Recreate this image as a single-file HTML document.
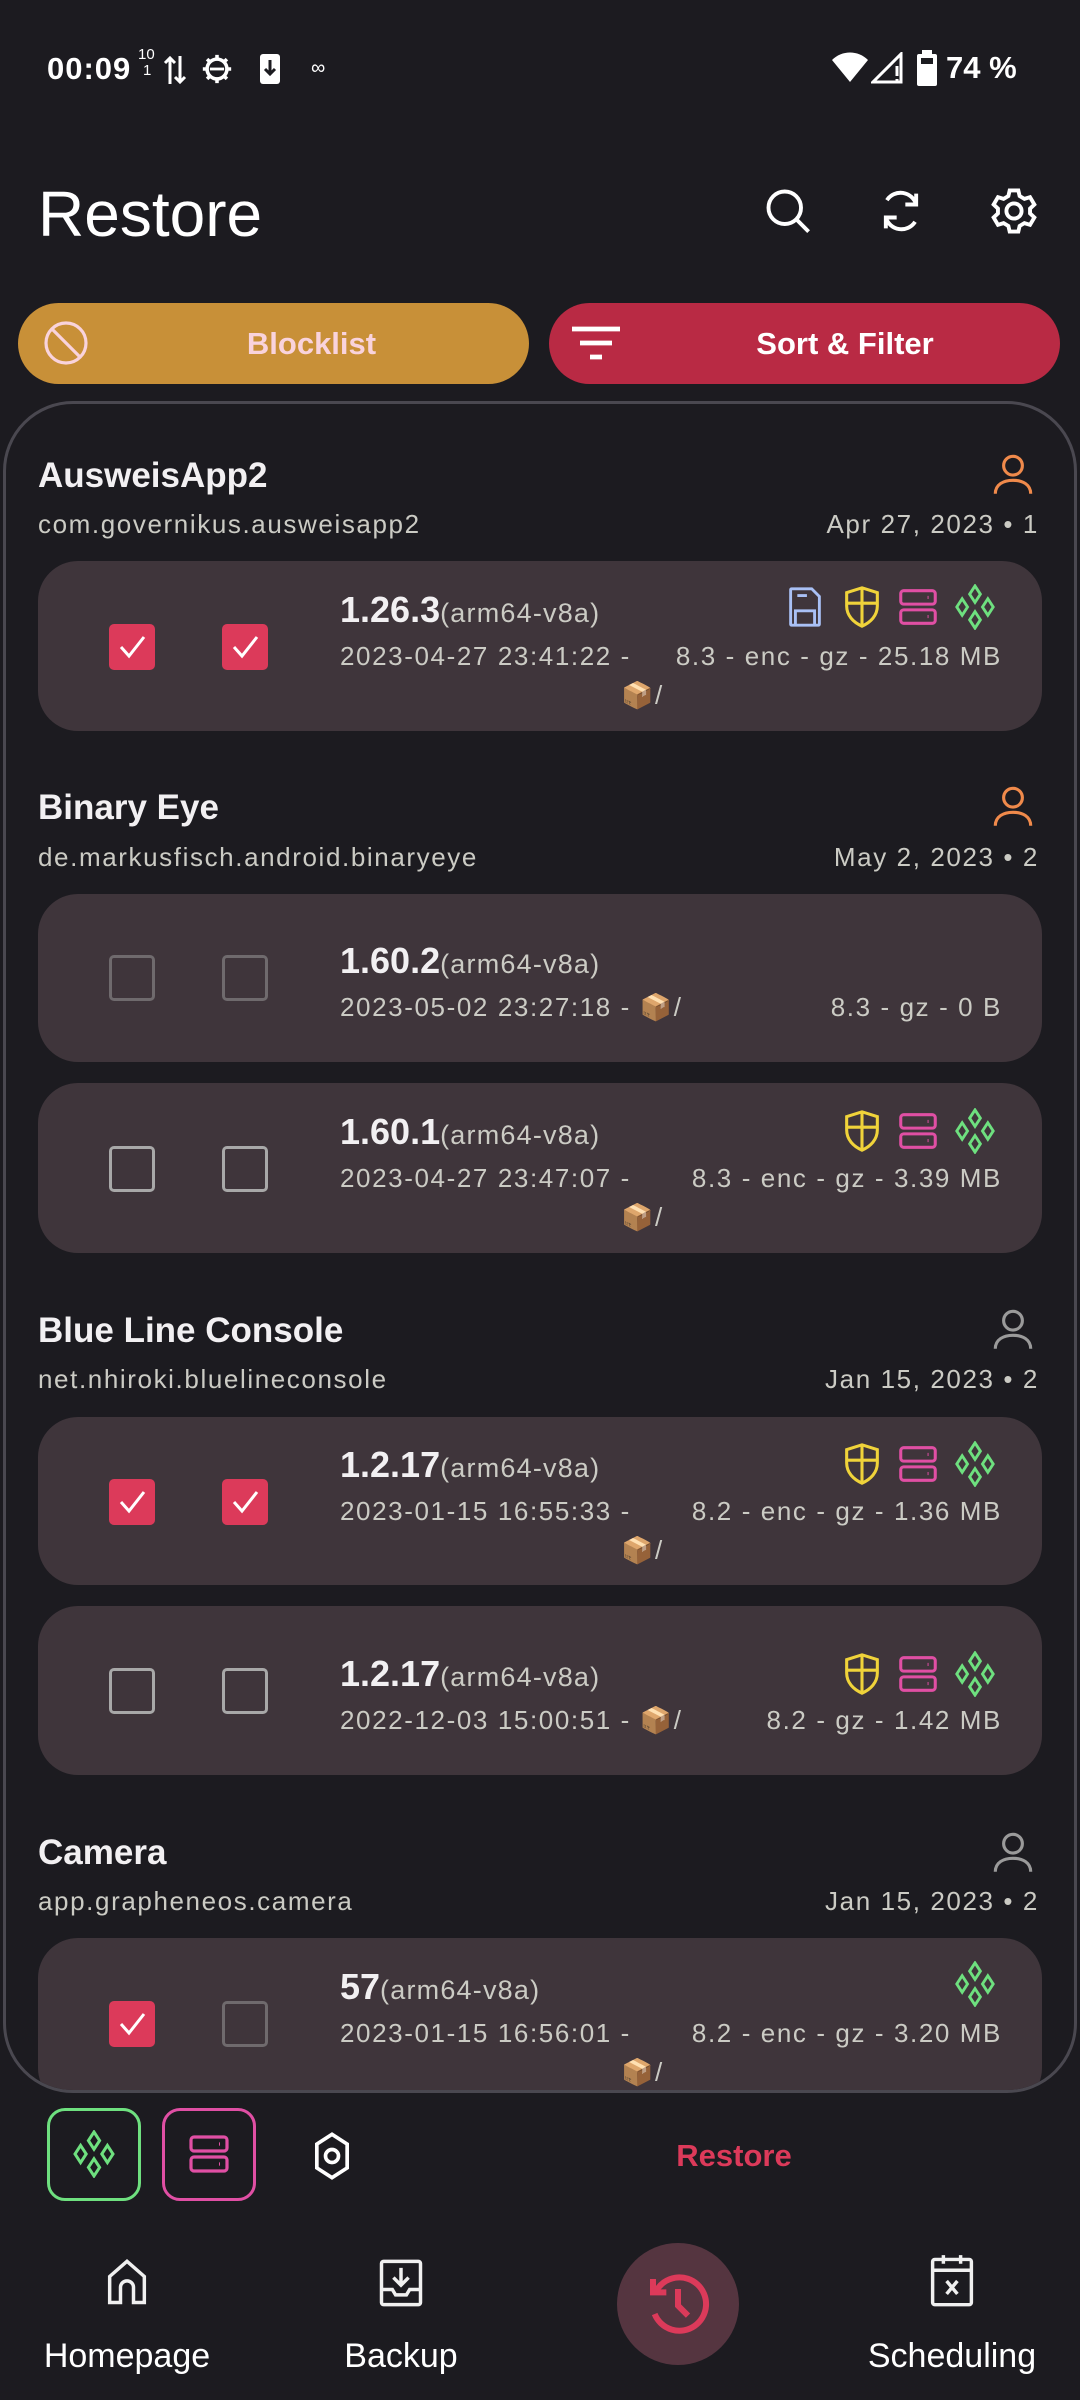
<!DOCTYPE html>
<html><head><meta charset="utf-8"><style>
*{margin:0;padding:0;box-sizing:border-box}
body{width:1080px;height:2400px;background:#1c1b20;font-family:"Liberation Sans",sans-serif;color:#fff;position:relative;overflow:hidden}
.a{position:absolute;white-space:nowrap}
.name{font-size:35px;font-weight:bold;color:#f2f0f2;line-height:44px}
.pkg{font-size:26px;color:#cbcbc4;line-height:34px;letter-spacing:1.6px}
.card{position:absolute;left:38px;width:1004px;background:#3f353b;border-radius:40px}
.cb{position:absolute;width:46px;height:46px;border-radius:5px}
.cb.on{background:#dc3a5a}
.cb.off{border:3px solid #a8a8a8}
.cb.dim{border:3px solid #6f6a6d}
.ver{font-size:36px;font-weight:bold;color:#f2f0f2;line-height:40px}
.ver span{font-size:27px;font-weight:normal;color:#cbcbc4;letter-spacing:1.2px}
.ln{font-size:26px;color:#cbcbc4;line-height:32px;letter-spacing:1.6px}
.ic{position:absolute;width:46px;height:46px}
</style></head><body>

<!-- status bar -->
<div class="a" style="left:47px;top:51px;font-size:31px;font-weight:bold;line-height:36px;letter-spacing:1px">00:09</div>
<div class="a" style="left:138px;top:47px;font-size:15px;line-height:16px">10</div>
<div class="a" style="left:143px;top:63px;font-size:15px;line-height:16px">1</div>
<svg class="a" style="left:163px;top:54px" width="24" height="32" viewBox="0 0 24 32"><path d="M7 30V4M2 9l5-5 5 5M17 2v26M12 23l5 5 5-5" stroke="#fff" stroke-width="3" fill="none"/></svg>
<svg class="a" style="left:200px;top:52px" width="34" height="34" viewBox="0 0 24 24"><circle cx="12" cy="12" r="7" stroke="#fff" stroke-width="2.5" fill="none"/><path d="M12 2v3M12 19v3M2 12h3M19 12h3M5 5l2 2M17 17l2 2M5 19l2-2M17 7l2-2" stroke="#fff" stroke-width="2.5"/><path d="M7 12h10" stroke="#fff" stroke-width="2"/></svg>
<svg class="a" style="left:258px;top:52px" width="24" height="34" viewBox="0 0 24 34"><rect x="2" y="2" width="20" height="30" rx="3" fill="#fff"/><path d="M12 8v14M7 17l5 5 5-5" stroke="#1c1b20" stroke-width="3" fill="none"/></svg>
<div class="a" style="left:311px;top:56px;font-size:20px;line-height:24px">∞</div>
<svg class="a" style="left:832px;top:52px" width="36" height="30" viewBox="0 0 36 30"><path d="M0 8C10-2 26-2 36 8L18 30z" fill="#fff"/></svg>
<svg class="a" style="left:871px;top:52px" width="32" height="32" viewBox="0 0 32 32"><path d="M30 2V30H2z" fill="none" stroke="#fff" stroke-width="3"/><path d="M26 14v10M26 27v3" stroke="#fff" stroke-width="3"/></svg>
<svg class="a" style="left:916px;top:50px" width="22" height="36" viewBox="0 0 22 36"><rect x="6" y="0" width="10" height="4" fill="#fff"/><rect x="1" y="4" width="20" height="32" rx="2" fill="#fff"/><rect x="5" y="8" width="12" height="6" fill="#1c1b20"/></svg>
<div class="a" style="left:946px;top:50px;font-size:31px;font-weight:bold;line-height:36px">74 %</div>

<!-- title -->
<div class="a" style="left:38px;top:176px;font-size:64px;line-height:76px;color:#fff">Restore</div>
<svg class="a" style="left:762px;top:185px" width="52" height="52" viewBox="0 0 24 24"><circle cx="10.5" cy="10.5" r="7.5" stroke="#fff" stroke-width="1.8" fill="none"/><path d="M16 16l5.5 5.5" stroke="#fff" stroke-width="1.8"/></svg>
<svg class="a" style="left:875px;top:185px" width="52" height="52" viewBox="0 0 24 24" fill="none" stroke="#fff" stroke-width="1.8"><path d="M19 9a7.5 7.5 0 0 0-13.5-2M19 4v5h-5M5 15a7.5 7.5 0 0 0 13.5 2M5 20v-5h5"/></svg>
<svg class="a" style="left:988px;top:185px" width="52" height="52" viewBox="0 0 24 24" fill="none" stroke="#fff" stroke-width="1.8"><path d="M10 2.5h4l.6 2.6 2.2 1.3 2.6-.8 2 3.4-2 1.9v2.2l2 1.9-2 3.4-2.6-.8-2.2 1.3-.6 2.6h-4l-.6-2.6-2.2-1.3-2.6.8-2-3.4 2-1.9v-2.2l-2-1.9 2-3.4 2.6.8 2.2-1.3z"/><circle cx="12" cy="12" r="3.5"/></svg>

<!-- buttons -->
<div class="a" style="left:18px;top:303px;width:511px;height:81px;border-radius:41px;background:#c89038"></div>
<svg class="a" style="left:42px;top:319px" width="48" height="48" viewBox="0 0 24 24" fill="none" stroke="#f9d3dc" stroke-width="1.6"><circle cx="12" cy="12" r="10"/><path d="M5 5l14 14"/></svg>
<div class="a" style="left:18px;width:587px;top:325px;text-align:center;font-size:31px;font-weight:bold;color:#f9d3dc;line-height:38px">Blocklist</div>
<div class="a" style="left:549px;top:303px;width:511px;height:81px;border-radius:41px;background:#b92a44"></div>
<svg class="a" style="left:570px;top:321px" width="52" height="44" viewBox="0 0 26 22" stroke="#fff" stroke-width="2.4"><path d="M1 4h24M5 11h16M10 18h6"/></svg>
<div class="a" style="left:640px;width:410px;top:325px;text-align:center;font-size:31px;font-weight:bold;color:#fff;line-height:38px">Sort &amp; Filter</div>

<!-- panel -->
<div class="a" style="left:3px;top:401px;width:1074px;height:1692px;border:3px solid #4a4850;border-radius:70px;overflow:hidden">
<div style="position:absolute;left:-6px;top:-404px;width:1080px;height:2400px">

<div class="a name" style="left:38px;top:454px">AusweisApp2</div>
<div class="a pkg" style="left:38px;top:507px">com.governikus.ausweisapp2</div>
<div class="a pkg" style="right:41px;top:507px">Apr 27, 2023 • 1</div>
<svg class="a" style="left:988px;top:449px" width="50" height="50" viewBox="0 0 24 24" fill="none" stroke="#f08a4b" stroke-width="1.5"><circle cx="12" cy="8" r="4.5"/><path d="M3.5 21.5c0-4.5 4-6.5 8.5-6.5s8.5 2 8.5 6.5"/></svg>

<div class="card" style="top:561px;height:170px">
 <div class="cb on" style="left:71px;top:63px"><svg width="46" height="46" viewBox="0 0 46 46"><path d="M12 23l8 9 15-19" stroke="#fff" stroke-width="3" fill="none"/></svg></div>
 <div class="cb on" style="left:184px;top:63px"><svg width="46" height="46" viewBox="0 0 46 46"><path d="M12 23l8 9 15-19" stroke="#fff" stroke-width="3" fill="none"/></svg></div>
 <div class="a ver" style="left:302px;top:29px">1.26.3<span>(arm64-v8a)</span></div>
 <div class="a ln" style="left:302px;top:79px">2023-04-27 23:41:22 -</div>
 <div class="a ln" style="right:40px;top:79px">8.3 - enc - gz - 25.18 MB</div>
 <div class="a ln" style="left:583px;top:118px">📦/</div>
 <svg class="ic" style="left:744px;top:23px" viewBox="0 0 24 24" fill="none" stroke="#a9c0f5" stroke-width="1.5"><path d="M5 2.5h10.5l4 4V21a.5.5 0 0 1-.5.5H5a.5.5 0 0 1-.5-.5V3a.5.5 0 0 1 .5-.5z"/><path d="M8 6h5M7 21.5V14h10v7.5"/></svg>
 <svg class="ic" style="left:801px;top:23px" viewBox="0 0 24 24" fill="none" stroke="#f0d33a" stroke-width="1.6"><path d="M12 2l8 2.5v7c0 5-3.5 8.5-8 10.5-4.5-2-8-5.5-8-10.5v-7z"/><path d="M12 2v20M4 10h16"/></svg>
 <svg class="ic" style="left:857px;top:23px" viewBox="0 0 24 24" fill="none" stroke="#e04fa4" stroke-width="1.6"><rect x="3" y="3.5" width="18" height="7" rx="1.5"/><rect x="3" y="13.5" width="18" height="7" rx="1.5"/><path d="M17 7h.5M17 17h.5"/></svg>
 <svg class="ic" style="left:914px;top:23px" viewBox="0 0 24 24" fill="none" stroke="#6ee07f" stroke-width="1.5"><path d="M12 1l2.8 4.3L12 9.6 9.2 5.3zM12 14.4l2.8 4.3L12 23l-2.8-4.3zM5.3 7.7l2.8 4.3-2.8 4.3L2.5 12zM18.7 7.7l2.8 4.3-2.8 4.3-2.8-4.3z"/></svg>
</div>

<div class="a name" style="left:38px;top:786px">Binary Eye</div>
<div class="a pkg" style="left:38px;top:840px">de.markusfisch.android.binaryeye</div>
<div class="a pkg" style="right:41px;top:840px">May 2, 2023 • 2</div>
<svg class="a" style="left:988px;top:781px" width="50" height="50" viewBox="0 0 24 24" fill="none" stroke="#f08a4b" stroke-width="1.5"><circle cx="12" cy="8" r="4.5"/><path d="M3.5 21.5c0-4.5 4-6.5 8.5-6.5s8.5 2 8.5 6.5"/></svg>

<div class="card" style="top:894px;height:168px">
 <div class="cb dim" style="left:71px;top:61px"></div>
 <div class="cb dim" style="left:184px;top:61px"></div>
 <div class="a ver" style="left:302px;top:47px">1.60.2<span>(arm64-v8a)</span></div>
 <div class="a ln" style="left:302px;top:97px">2023-05-02 23:27:18 - 📦/</div>
 <div class="a ln" style="right:40px;top:97px">8.3 - gz - 0 B</div>
</div>

<div class="card" style="top:1083px;height:170px">
 <div class="cb off" style="left:71px;top:63px"></div>
 <div class="cb off" style="left:184px;top:63px"></div>
 <div class="a ver" style="left:302px;top:29px">1.60.1<span>(arm64-v8a)</span></div>
 <div class="a ln" style="left:302px;top:79px">2023-04-27 23:47:07 -</div>
 <div class="a ln" style="right:40px;top:79px">8.3 - enc - gz - 3.39 MB</div>
 <div class="a ln" style="left:583px;top:118px">📦/</div>
 <svg class="ic" style="left:801px;top:25px" viewBox="0 0 24 24" fill="none" stroke="#f0d33a" stroke-width="1.6"><path d="M12 2l8 2.5v7c0 5-3.5 8.5-8 10.5-4.5-2-8-5.5-8-10.5v-7z"/><path d="M12 2v20M4 10h16"/></svg>
 <svg class="ic" style="left:857px;top:25px" viewBox="0 0 24 24" fill="none" stroke="#e04fa4" stroke-width="1.6"><rect x="3" y="3.5" width="18" height="7" rx="1.5"/><rect x="3" y="13.5" width="18" height="7" rx="1.5"/><path d="M17 7h.5M17 17h.5"/></svg>
 <svg class="ic" style="left:914px;top:25px" viewBox="0 0 24 24" fill="none" stroke="#6ee07f" stroke-width="1.5"><path d="M12 1l2.8 4.3L12 9.6 9.2 5.3zM12 14.4l2.8 4.3L12 23l-2.8-4.3zM5.3 7.7l2.8 4.3-2.8 4.3L2.5 12zM18.7 7.7l2.8 4.3-2.8 4.3-2.8-4.3z"/></svg>
</div>

<div class="a name" style="left:38px;top:1309px">Blue Line Console</div>
<div class="a pkg" style="left:38px;top:1362px">net.nhiroki.bluelineconsole</div>
<div class="a pkg" style="right:41px;top:1362px">Jan 15, 2023 • 2</div>
<svg class="a" style="left:988px;top:1304px" width="50" height="50" viewBox="0 0 24 24" fill="none" stroke="#9a9a9a" stroke-width="1.5"><circle cx="12" cy="8" r="4.5"/><path d="M3.5 21.5c0-4.5 4-6.5 8.5-6.5s8.5 2 8.5 6.5"/></svg>

<div class="card" style="top:1417px;height:168px">
 <div class="cb on" style="left:71px;top:62px"><svg width="46" height="46" viewBox="0 0 46 46"><path d="M12 23l8 9 15-19" stroke="#fff" stroke-width="3" fill="none"/></svg></div>
 <div class="cb on" style="left:184px;top:62px"><svg width="46" height="46" viewBox="0 0 46 46"><path d="M12 23l8 9 15-19" stroke="#fff" stroke-width="3" fill="none"/></svg></div>
 <div class="a ver" style="left:302px;top:28px">1.2.17<span>(arm64-v8a)</span></div>
 <div class="a ln" style="left:302px;top:78px">2023-01-15 16:55:33 -</div>
 <div class="a ln" style="right:40px;top:78px">8.2 - enc - gz - 1.36 MB</div>
 <div class="a ln" style="left:583px;top:117px">📦/</div>
 <svg class="ic" style="left:801px;top:24px" viewBox="0 0 24 24" fill="none" stroke="#f0d33a" stroke-width="1.6"><path d="M12 2l8 2.5v7c0 5-3.5 8.5-8 10.5-4.5-2-8-5.5-8-10.5v-7z"/><path d="M12 2v20M4 10h16"/></svg>
 <svg class="ic" style="left:857px;top:24px" viewBox="0 0 24 24" fill="none" stroke="#e04fa4" stroke-width="1.6"><rect x="3" y="3.5" width="18" height="7" rx="1.5"/><rect x="3" y="13.5" width="18" height="7" rx="1.5"/><path d="M17 7h.5M17 17h.5"/></svg>
 <svg class="ic" style="left:914px;top:24px" viewBox="0 0 24 24" fill="none" stroke="#6ee07f" stroke-width="1.5"><path d="M12 1l2.8 4.3L12 9.6 9.2 5.3zM12 14.4l2.8 4.3L12 23l-2.8-4.3zM5.3 7.7l2.8 4.3-2.8 4.3L2.5 12zM18.7 7.7l2.8 4.3-2.8 4.3-2.8-4.3z"/></svg>
</div>

<div class="card" style="top:1606px;height:169px">
 <div class="cb off" style="left:71px;top:62px"></div>
 <div class="cb off" style="left:184px;top:62px"></div>
 <div class="a ver" style="left:302px;top:48px">1.2.17<span>(arm64-v8a)</span></div>
 <div class="a ln" style="left:302px;top:98px">2022-12-03 15:00:51 - 📦/</div>
 <div class="a ln" style="right:40px;top:98px">8.2 - gz - 1.42 MB</div>
 <svg class="ic" style="left:801px;top:45px" viewBox="0 0 24 24" fill="none" stroke="#f0d33a" stroke-width="1.6"><path d="M12 2l8 2.5v7c0 5-3.5 8.5-8 10.5-4.5-2-8-5.5-8-10.5v-7z"/><path d="M12 2v20M4 10h16"/></svg>
 <svg class="ic" style="left:857px;top:45px" viewBox="0 0 24 24" fill="none" stroke="#e04fa4" stroke-width="1.6"><rect x="3" y="3.5" width="18" height="7" rx="1.5"/><rect x="3" y="13.5" width="18" height="7" rx="1.5"/><path d="M17 7h.5M17 17h.5"/></svg>
 <svg class="ic" style="left:914px;top:45px" viewBox="0 0 24 24" fill="none" stroke="#6ee07f" stroke-width="1.5"><path d="M12 1l2.8 4.3L12 9.6 9.2 5.3zM12 14.4l2.8 4.3L12 23l-2.8-4.3zM5.3 7.7l2.8 4.3-2.8 4.3L2.5 12zM18.7 7.7l2.8 4.3-2.8 4.3-2.8-4.3z"/></svg>
</div>

<div class="a name" style="left:38px;top:1831px">Camera</div>
<div class="a pkg" style="left:38px;top:1884px">app.grapheneos.camera</div>
<div class="a pkg" style="right:41px;top:1884px">Jan 15, 2023 • 2</div>
<svg class="a" style="left:988px;top:1827px" width="50" height="50" viewBox="0 0 24 24" fill="none" stroke="#9a9a9a" stroke-width="1.5"><circle cx="12" cy="8" r="4.5"/><path d="M3.5 21.5c0-4.5 4-6.5 8.5-6.5s8.5 2 8.5 6.5"/></svg>

<div class="card" style="top:1938px;height:170px">
 <div class="cb on" style="left:71px;top:63px"><svg width="46" height="46" viewBox="0 0 46 46"><path d="M12 23l8 9 15-19" stroke="#fff" stroke-width="3" fill="none"/></svg></div>
 <div class="cb dim" style="left:184px;top:63px"></div>
 <div class="a ver" style="left:302px;top:29px">57<span>(arm64-v8a)</span></div>
 <div class="a ln" style="left:302px;top:79px">2023-01-15 16:56:01 -</div>
 <div class="a ln" style="right:40px;top:79px">8.2 - enc - gz - 3.20 MB</div>
 <div class="a ln" style="left:583px;top:118px">📦/</div>
 <svg class="ic" style="left:914px;top:23px" viewBox="0 0 24 24" fill="none" stroke="#6ee07f" stroke-width="1.5"><path d="M12 1l2.8 4.3L12 9.6 9.2 5.3zM12 14.4l2.8 4.3L12 23l-2.8-4.3zM5.3 7.7l2.8 4.3-2.8 4.3L2.5 12zM18.7 7.7l2.8 4.3-2.8 4.3-2.8-4.3z"/></svg>
</div>

</div></div>

<!-- bottom chips -->
<div class="a" style="left:47px;top:2108px;width:94px;height:93px;border:3px solid #6ee07f;border-radius:18px"></div>
<svg class="a" style="left:70px;top:2130px" width="48" height="48" viewBox="0 0 24 24" fill="none" stroke="#6ee07f" stroke-width="1.5"><path d="M12 1l2.8 4.3L12 9.6 9.2 5.3zM12 14.4l2.8 4.3L12 23l-2.8-4.3zM5.3 7.7l2.8 4.3-2.8 4.3L2.5 12zM18.7 7.7l2.8 4.3-2.8 4.3-2.8-4.3z"/></svg>
<div class="a" style="left:162px;top:2108px;width:94px;height:93px;border:3px solid #e04fa4;border-radius:18px"></div>
<svg class="a" style="left:185px;top:2130px" width="48" height="48" viewBox="0 0 24 24" fill="none" stroke="#e04fa4" stroke-width="1.6"><rect x="3" y="3.5" width="18" height="7" rx="1.5"/><rect x="3" y="13.5" width="18" height="7" rx="1.5"/><path d="M17 7h.5M17 17h.5"/></svg>
<svg class="a" style="left:306px;top:2130px" width="52" height="52" viewBox="0 0 24 24" fill="none" stroke="#fff" stroke-width="1.7"><path d="M12 2l7 4.5v11L12 22l-7-4.5v-11z"/><circle cx="12" cy="12" r="3"/></svg>
<div class="a" style="left:634px;width:200px;text-align:center;top:2137px;font-size:31px;font-weight:bold;color:#dc3a5a;line-height:38px">Restore</div>

<!-- nav -->
<svg class="a" style="left:101px;top:2257px" width="52" height="52" viewBox="0 0 24 24" fill="none" stroke="#f0f0f0" stroke-width="1.6"><path d="M4 21V9l8-7 8 7v12h-5v-7a3 3 0 0 0-6 0v7z"/></svg>
<div class="a" style="left:27px;width:200px;text-align:center;top:2336px;font-size:34px;color:#fff;line-height:40px">Homepage</div>
<svg class="a" style="left:375px;top:2257px" width="52" height="52" viewBox="0 0 24 24" fill="none" stroke="#f0f0f0" stroke-width="1.6"><rect x="3" y="2" width="18" height="20" rx="1"/><path d="M12 5v8M8.5 9.5l3.5 3.5 3.5-3.5M3 15h5l1.5 2.5h5L16 15h5"/></svg>
<div class="a" style="left:301px;width:200px;text-align:center;top:2336px;font-size:34px;color:#fff;line-height:40px">Backup</div>
<div class="a" style="left:617px;top:2243px;width:122px;height:122px;border-radius:61px;background:#553540"></div>
<svg class="a" style="left:638px;top:2264px" width="80" height="80" viewBox="0 0 24 24" fill="none" stroke="#dc3a5a" stroke-width="1.8"><path d="M5.5 8A8 8 0 1 1 5 15"/><path d="M4.5 4.5v4h4M12 7.5v5l3 3"/></svg>
<svg class="a" style="left:926px;top:2253px" width="52" height="56" viewBox="0 0 24 26" fill="none" stroke="#f0f0f0" stroke-width="1.6"><rect x="3" y="3" width="18" height="21" rx="1"/><path d="M3 8h18M8 1v4M16 1v4M9.5 13l5 6M14.5 13l-5 6"/></svg>
<div class="a" style="left:852px;width:200px;text-align:center;top:2336px;font-size:34px;color:#fff;line-height:40px">Scheduling</div>
</body></html>
